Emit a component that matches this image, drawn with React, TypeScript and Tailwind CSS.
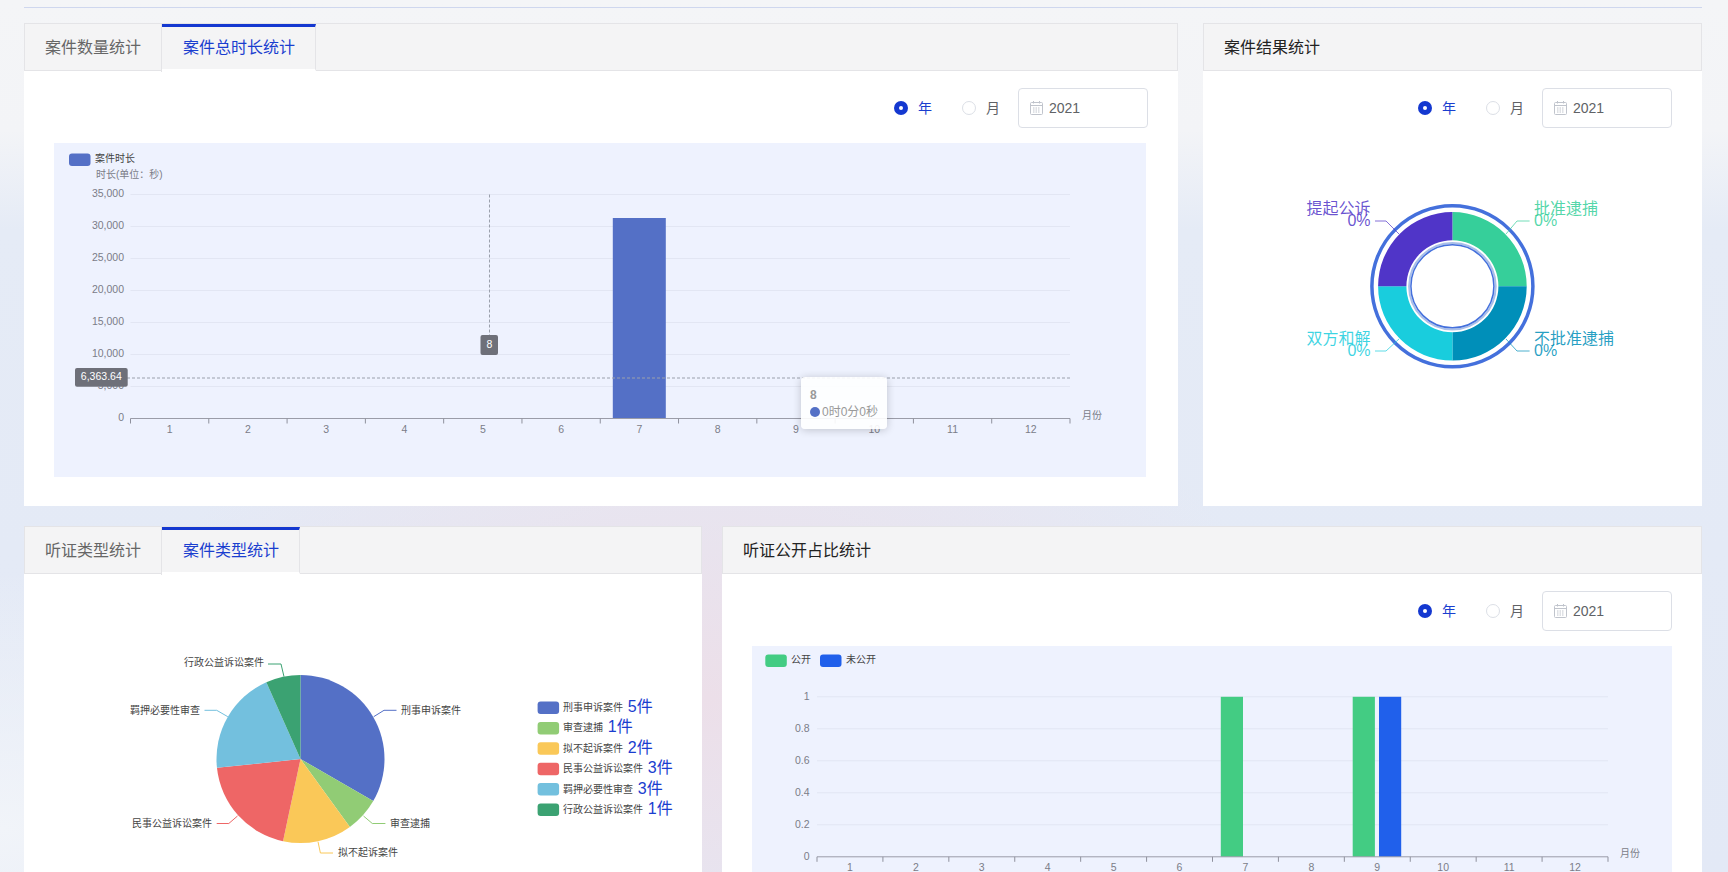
import React from 'react';

const MONTHS = [1, 2, 3, 4, 5, 6, 7, 8, 9, 10, 11, 12];

function Controls() {
  return (
    <div className="flex items-center justify-end pr-[30px] pt-[17.5px] h-[57.5px] text-sm">
      <span className="w-3.5 h-3.5 rounded-full bg-[#1438d0] flex items-center justify-center">
        <span className="w-1 h-1 rounded-full bg-white" />
      </span>
      <span className="ml-2.5 text-[#1a3ecf]">年</span>
      <span className="ml-[30px] w-3.5 h-3.5 rounded-full border border-[#dcdfe6] bg-white" />
      <span className="ml-2.5 text-[#606266]">月</span>
      <div className="ml-[18px] w-[130px] h-10 rounded border border-[#dcdfe6] bg-white flex items-center pl-[11px] text-[#606266]">
        <svg width="13" height="14" viewBox="0 0 13 14" fill="none" stroke="#c0c4cc">
          <rect x="0.5" y="1.5" width="12" height="12" rx="1" />
          <path d="M0.5 4.5h12M3.5 0v2.5M9.5 0v2.5" />
          <path d="M3 7h7M3 9h7M3 11h7" strokeDasharray="1.5 1" />
        </svg>
        <span className="ml-1.5">2021</span>
      </div>
    </div>
  );
}

function TabHeader({ tabs, active }: { tabs: string[]; active: number }) {
  return (
    <div className="flex h-[47.5px] bg-[#f4f4f5] border border-[#e4e4e7]">
      {tabs.map((tab, i) =>
        i === active ? (
          <div
            key={tab}
            className="-mb-px pl-[21px] pr-5 flex items-center text-base text-[#1a3ecf] border-t-[3px] border-t-[#1438d0] border-r border-r-[#e4e4e7] border-b-2 border-b-white"
          >
            {tab}
          </div>
        ) : (
          <div key={tab} className="-mb-0.5 px-5 flex items-center text-base text-[#666666] border-r border-[#e4e4e7]">
            {tab}
          </div>
        )
      )}
    </div>
  );
}

function TitleHeader({ title }: { title: string }) {
  return (
    <div className="flex items-center h-[47.5px] px-5 pt-0.5 bg-[#f4f4f5] border border-[#e4e4e7] text-base text-[#222222]">
      {title}
    </div>
  );
}

function AxisBottom({ x0, x1, y, unitX, unitY }: { x0: number; x1: number; y: number; unitX: number; unitY: number }) {
  const w = (x1 - x0) / 12;
  return (
    <g>
      <line x1={x0} x2={x1} y1={y} y2={y} stroke="#9a9ca8" />
      {[...MONTHS, 13].map((m) => (
        <line key={m} x1={x0 + (m - 1) * w} x2={x0 + (m - 1) * w} y1={y} y2={y + 5} stroke="#8f919d" />
      ))}
      {MONTHS.map((m) => (
        <text key={m} x={x0 + (m - 0.5) * w} y={y + 11.5} fontSize="10.5" fill="#7b7d88" textAnchor="middle" dominantBaseline="middle">
          {m}
        </text>
      ))}
      <text x={unitX} y={unitY} fontSize="10" fill="#7b7d88" dominantBaseline="middle">
        月份
      </text>
    </g>
  );
}

function DurationChart() {
  const ticks = ['0', '5,000', '10,000', '15,000', '20,000', '25,000', '30,000', '35,000'];
  return (
    <div className="relative ml-[30px] w-[1092px] h-[334px] bg-[#eef2fe]">
      <svg width="1092" height="334" viewBox="54 143 1092 334" className="block">
        <rect x="69" y="153.5" width="21.5" height="12.5" rx="3" fill="#5470c6" />
        <text x="95" y="159.5" fontSize="10" fill="#444444" dominantBaseline="middle">案件时长</text>
        <text x="96" y="175" fontSize="10" fill="#7b7d88" dominantBaseline="middle">时长(单位：秒)</text>
        {ticks.map((t, i) => (
          <g key={t}>
            {i > 0 && <line x1="130.5" x2="1070" y1={418.5 - i * 32} y2={418.5 - i * 32} stroke="#e2e6f3" />}
            <text x="124" y={418.5 - i * 32} fontSize="10.5" fill="#7b7d88" textAnchor="end" dominantBaseline="middle">
              {t}
            </text>
          </g>
        ))}
        <rect x="612.8" y="218" width="53" height="200.5" fill="#5470c6" />
        <AxisBottom x0={130.5} x1={1070} y={418.5} unitX={1082} unitY={416.5} />
        <line x1="489.5" x2="489.5" y1="194.5" y2="335" stroke="#9aa0ac" strokeDasharray="3 2" />
        <line x1="127" x2="1070" y1="378" y2="378" stroke="#9aa0ac" strokeDasharray="3 2" />
        <rect x="75" y="368" width="52.7" height="18.7" rx="2" fill="#6e7079" />
        <text x="101.3" y="377.5" fontSize="10.5" fill="#ffffff" textAnchor="middle" dominantBaseline="middle">6,363.64</text>
        <rect x="480.5" y="335" width="17.5" height="20" rx="2" fill="#6e7079" />
        <text x="489.3" y="345" fontSize="10.5" fill="#ffffff" textAnchor="middle" dominantBaseline="middle">8</text>
      </svg>
      <div className="absolute left-[747px] top-[234px] w-[86px] h-[52px] rounded bg-white/90 shadow-[0_1px_8px_rgba(0,0,0,0.2)] px-[9px] pt-[9px] text-xs text-[#999999] whitespace-nowrap">
        <div className="font-bold leading-[18px]">8</div>
        <div className="flex items-center leading-[16px]">
          <span className="w-2.5 h-2.5 shrink-0 rounded-full bg-[#5470c6] mr-0.5" />
          0时0分0秒
        </div>
      </div>
    </div>
  );
}

function polar(cx: number, cy: number, r: number, deg: number) {
  const a = (deg * Math.PI) / 180;
  return [cx + r * Math.sin(a), cy - r * Math.cos(a)];
}

function slicePath(cx: number, cy: number, r0: number, r1: number, from: number, to: number) {
  const [ax, ay] = polar(cx, cy, r1, from);
  const [bx, by] = polar(cx, cy, r1, to);
  const large = to - from > 180 ? 1 : 0;
  if (r0 === 0) return `M${cx} ${cy}L${ax} ${ay}A${r1} ${r1} 0 ${large} 1 ${bx} ${by}Z`;
  const [cxx, cyy] = polar(cx, cy, r0, to);
  const [dx, dy] = polar(cx, cy, r0, from);
  return `M${ax} ${ay}A${r1} ${r1} 0 ${large} 1 ${bx} ${by}L${cxx} ${cyy}A${r0} ${r0} 0 ${large} 0 ${dx} ${dy}Z`;
}

const OUTCOMES = [
  { name: '批准逮捕', color: '#36cf9a', from: 0, to: 90, x: 1534, y: 208, anchor: 'start', line: '1506,234 1517,221 1529.6,221' },
  { name: '不批准逮捕', color: '#008fb9', from: 90, to: 180, x: 1534, y: 338, anchor: 'start', line: '1506,339 1517,351 1529.6,351' },
  { name: '双方和解', color: '#19cddd', from: 180, to: 270, x: 1370.5, y: 338, anchor: 'end', line: '1399,339 1386,351 1375,351' },
  { name: '提起公诉', color: '#5035c8', from: 270, to: 360, x: 1370.5, y: 208, anchor: 'end', line: '1399,234 1386,221 1375,221' },
];

function OutcomeDonut() {
  const cx = 1452.4;
  const cy = 286.3;
  return (
    <svg width="499" height="378" viewBox="1203 128 499 378" className="block">
      <circle cx={cx} cy={cy} r="80.5" fill="none" stroke="#4470dc" strokeWidth="3.5" />
      {OUTCOMES.map((o) => (
        <g key={o.name}>
          <path d={slicePath(cx, cy, 46, 74.3, o.from, o.to)} fill={o.color} />
          <polyline points={o.line} fill="none" stroke={o.color} strokeOpacity="0.7" />
          <text x={o.x} y={o.y + 2} fontSize="16" fill={o.color} fillOpacity="0.85" textAnchor={o.anchor as 'start' | 'end'} dominantBaseline="middle">
            {o.name}
          </text>
          <text x={o.x} y={o.y + 13.5} fontSize="16" fill={o.color} fillOpacity="0.85" textAnchor={o.anchor as 'start' | 'end'} dominantBaseline="middle">
            0%
          </text>
        </g>
      ))}
      <circle cx={cx} cy={cy} r="43.3" fill="none" stroke="#a9bfe9" strokeWidth="2" />
      <circle cx={cx} cy={cy} r="41.5" fill="none" stroke="#4470dc" strokeWidth="1.5" />
    </svg>
  );
}

const CASE_TYPES = [
  { name: '刑事申诉案件', count: 5, color: '#5470c6', from: 0, to: 120, x: 401, y: 710, anchor: 'start', line: '373.7,716.7 384,710.3 396.5,710.3' },
  { name: '审查逮捕', count: 1, color: '#91cc75', from: 120, to: 144, x: 390, y: 823, anchor: 'start', line: '363.5,816 372.3,823.5 385.4,823.5' },
  { name: '拟不起诉案件', count: 2, color: '#fac858', from: 144, to: 192, x: 338, y: 852.7, anchor: 'start', line: '318,841.7 320.4,853 333,853' },
  { name: '民事公益诉讼案件', count: 3, color: '#ee6666', from: 192, to: 264, x: 212, y: 823, anchor: 'end', line: '237.5,816 228.8,823.5 216.7,823.5' },
  { name: '羁押必要性审查', count: 3, color: '#73c0de', from: 264, to: 336, x: 200, y: 710, anchor: 'end', line: '227.8,716.7 216.7,710.3 204.5,710.3' },
  { name: '行政公益诉讼案件', count: 1, color: '#3ba272', from: 336, to: 360, x: 264, y: 662.7, anchor: 'end', line: '284,676.7 281,664 268,664' },
];

function CaseTypePie() {
  return (
    <svg width="678" height="298" viewBox="24 574 678 298" className="block">
      {CASE_TYPES.map((c, i) => (
        <g key={c.name}>
          <path d={slicePath(300.5, 759, 0, 84, c.from, c.to)} fill={c.color} />
          <polyline points={c.line} fill="none" stroke={c.color} />
          <text x={c.x} y={c.y + 1} fontSize="10" fill="#444444" textAnchor={c.anchor as 'start' | 'end'} dominantBaseline="middle">
            {c.name}
          </text>
          <rect x="537.6" y={701.5 + i * 20.4} width="21.5" height="12.5" rx="3" fill={c.color} />
          <text x="563" y={708 + i * 20.4} dominantBaseline="middle">
            <tspan fontSize="10" fill="#444444">{c.name} </tspan>
            <tspan fontSize="16" fill="#1a3ecf" dx="2">{c.count}件</tspan>
          </text>
        </g>
      ))}
    </svg>
  );
}

function PublicChart() {
  const ticks = ['0', '0.2', '0.4', '0.6', '0.8', '1'];
  return (
    <div className="ml-[30px] mr-[30px] h-[334px] bg-[#eef2fe]">
      <svg width="920" height="334" viewBox="752 646.5 920 334" className="block">
        <rect x="765.3" y="655" width="21.5" height="12.5" rx="3" fill="#43cc83" />
        <text x="791" y="661" fontSize="10" fill="#444444" dominantBaseline="middle">公开</text>
        <rect x="820" y="655" width="21.5" height="12.5" rx="3" fill="#2060eb" />
        <text x="846" y="661" fontSize="10" fill="#444444" dominantBaseline="middle">未公开</text>
        {ticks.map((t, i) => (
          <g key={t}>
            {i > 0 && <line x1="817" x2="1608" y1={857.3 - i * 32} y2={857.3 - i * 32} stroke="#e2e6f3" />}
            <text x="809.5" y={857.3 - i * 32} fontSize="10.5" fill="#7b7d88" textAnchor="end" dominantBaseline="middle">
              {t}
            </text>
          </g>
        ))}
        <rect x="1220.8" y="697.3" width="22.2" height="160" fill="#43cc83" />
        <rect x="1352.7" y="697.3" width="22.2" height="160" fill="#43cc83" />
        <rect x="1379" y="697.3" width="22.2" height="160" fill="#2060eb" />
        <AxisBottom x0={817} x1={1608} y={857.3} unitX={1620} unitY={855} />
      </svg>
    </div>
  );
}

export default function App() {
  return (
    <div className="h-[872px] overflow-hidden pl-6 pr-[26px] pt-[7px] font-['Liberation_Sans','Noto_Sans_CJK_SC',sans-serif] bg-[radial-gradient(ellipse_at_41%_80%,#ecdfe9_0%,transparent_40%),radial-gradient(ellipse_at_0%_95%,#f1f4f9_0%,transparent_22%),linear-gradient(180deg,#f4f5f7_0px,#f3f4f7_130px,#e5ebf6_230px,#e3e9f6_872px)]">
      <div className="h-px bg-[#cfd7ee]" />
      <div className="pt-[15px] flex gap-[25px]">
        <div className="w-[1154px] h-[483px] bg-white">
          <TabHeader tabs={['案件数量统计', '案件总时长统计']} active={1} />
          <Controls />
          <div className="mt-[15px]">
            <DurationChart />
          </div>
        </div>
        <div className="flex-1 h-[483px] bg-white">
          <TitleHeader title="案件结果统计" />
          <Controls />
          <OutcomeDonut />
        </div>
      </div>
      <div className="mt-5 flex gap-5">
        <div className="w-[678px] h-[420px] bg-white">
          <TabHeader tabs={['听证类型统计', '案件类型统计']} active={1} />
          <CaseTypePie />
        </div>
        <div className="flex-1 h-[420px] bg-white">
          <TitleHeader title="听证公开占比统计" />
          <Controls />
          <div className="mt-[15px]">
            <PublicChart />
          </div>
        </div>
      </div>
    </div>
  );
}
